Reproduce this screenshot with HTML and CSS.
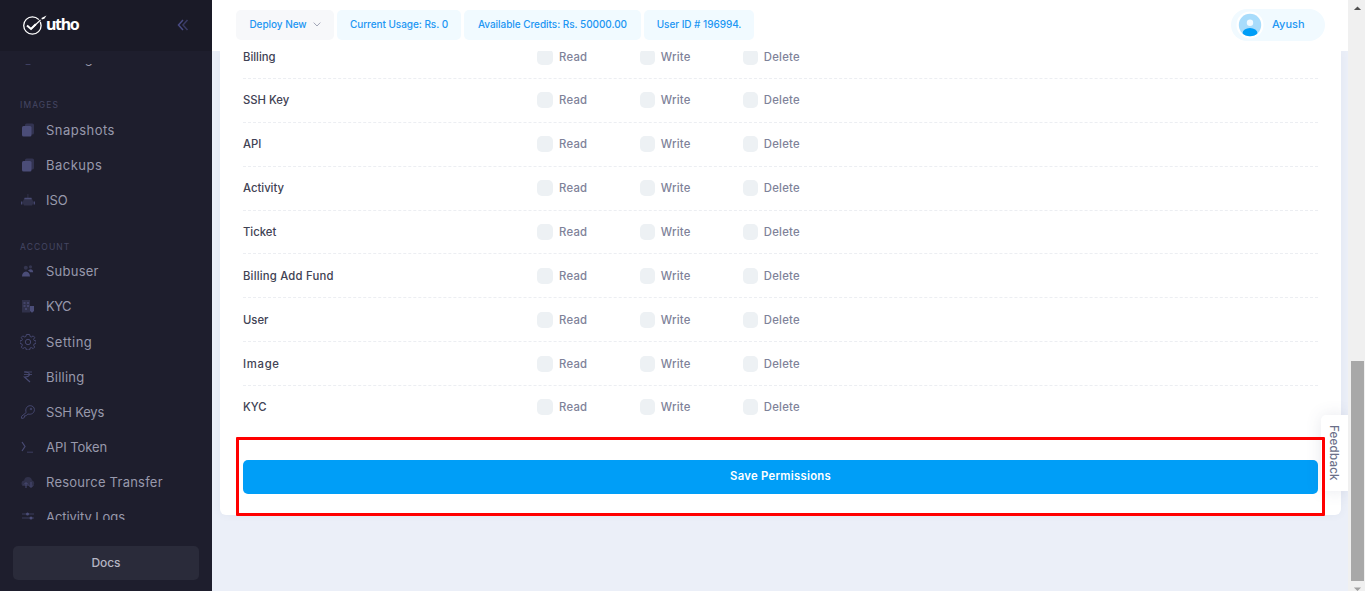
FILE: index.html
```
<!DOCTYPE html>
<html lang="en">
<head>
<meta charset="utf-8">
<title>Utho - Subuser Permissions</title>
<link rel="stylesheet" href="styles.css">
</head>
<body>
<div class="app">
  <aside class="sidebar">
    <div class="brand">
      <div class="logo">
        <svg width="24" height="22" viewBox="0 0 24 22" fill="none" stroke="#fff"><circle cx="9.400" cy="11.500" r="8.700" stroke-width="1.300"/><path d="M4 11.500l4 3.500 5-5" stroke-width="2"/><path d="M13 10l6.500-6" stroke="#1a1a27" stroke-width="2.500"/><path d="M8 15L17.500 6" stroke-width="1.100"/><path d="M18.500 4L23.500 1.500l-2.200 3.200-2.500.8z" fill="#fff" stroke="none"/></svg>
        <span class="logo-text">utho</span>
      </div>
      <svg class="collapse" width="12" height="12" viewBox="0 0 12 12" fill="none" stroke-width="1.500"><path d="M6 1L1.500 6 6 11" stroke="#494b84"/><path d="M10.500 1L6 6l4.500 5" stroke="#494b84" opacity=".65"/></svg>
    </div>
    <nav class="menu">
      <div class="menu-list">
        <a class="item clipped"><svg class="icon" viewBox="0 0 16 16"><path d="M4 13h8l-2 1.800H6z" fill="#494b74"/></svg><span>Hosting</span></a>
        <h4 class="heading">Images</h4>
        <a class="item wide"><svg class="icon" viewBox="0 0 16 16"><rect x="5" y="1.500" width="9" height="11" rx="1.500" fill="#323350"/><rect x="2" y="4" width="9.500" height="10.500" rx="1.500" fill="#4b4d78"/></svg><span>Snapshots</span></a>
        <a class="item wide"><svg class="icon" viewBox="0 0 16 16"><rect x="5" y="1.500" width="9" height="11" rx="1.500" fill="#323350"/><rect x="2" y="4" width="9.500" height="10.500" rx="1.500" fill="#4b4d78"/></svg><span>Backups</span></a>
        <a class="item tight"><svg class="icon" viewBox="0 0 16 16"><path d="M7.400 2h1v4h3.200l2 4.500-1.500 3H4l-1.500-3L4.400 6h3z" fill="#30314a"/><path d="M4.500 6.500h7M1.700 9.500v3M14.300 9.500v3" stroke="#494b74" stroke-width="1.300"/></svg><span>ISO</span></a>
        <h4 class="heading account">Account</h4>
        <a class="item"><svg class="icon" viewBox="0 0 16 16"><circle cx="5.800" cy="4.700" r="2" fill="#34354f"/><circle cx="10.500" cy="3.800" r="1.600" fill="#34354f"/><path d="M2 13.500c0-2.800 1.600-5 4-5s4 2.200 4 5zM8 8c.5-1 1.400-1.800 2.500-1.800 1.700 0 2.500 1.300 2.700 3h-3C9.500 8.500 9 8 8 8z" fill="#4b4d78"/></svg><span>Subuser</span></a>
        <a class="item tighter"><svg class="icon" viewBox="0 0 16 16"><path d="M2 2h8v12.500H2z" fill="#30314a"/><path d="M3.500 5h2M7 5h2M3.500 8h2M7 8h2M5 11h2" stroke="#494b74" stroke-width="1.400"/><path d="M10 8h4v5l-2 1.700-2-1.700z" fill="#4b4d78"/></svg><span>KYC</span></a>
        <a class="item wide"><svg class="icon" viewBox="0 0 16 16" fill="none" stroke="#45476f" stroke-width="1"><path d="M6.400.5h3.200l.5 2 1.200.5 1.900-1.100 1.500 1.500-1.100 2 .5 1 2 .5v2.500l-2 .6-.5 1.200 1.100 1.900-1.500 1.500-1.900-1.100-1.200.5-.5 2H6.400l-.5-2-1.200-.5-1.900 1.100-1.500-1.500 1.100-1.900-.5-1.200-2-.6V6.900l2-.5.5-1-1.100-2 1.500-1.500L4.700 3l1.200-.5z"/><circle cx="8" cy="8" r="2.700"/></svg><span>Setting</span></a>
        <a class="item"><svg class="icon" viewBox="0 0 16 16" fill="none" stroke="#494b74" stroke-width="1.100"><path d="M4 3h8M4 5.500h8" opacity=".8"/><path d="M4.500 3C11 2.500 11 8.300 4.500 8l5.500 5"/></svg><span>Billing</span></a>
        <a class="item key"><svg class="icon" viewBox="0 0 16 16" fill="none" stroke="#45476f" stroke-width="1"><path d="M6.200 8.500C4.800 5 7 1.700 10.200 1.700c2.500 0 4.200 1.700 4.200 4 0 3.200-3 5.300-6.600 4.300L6 11.800H4.500v1.500L3 14.300H1.500v-1.900z"/><circle cx="11" cy="5" r=".8"/></svg><span>SSH Keys</span></a>
        <a class="item tight"><svg class="icon" viewBox="0 0 16 16" fill="none" stroke="#494b74" stroke-width="1.200"><path d="M2 3l3 4.500L2 12"/><path d="M7 13.200h6" opacity=".6"/></svg><span>API Token</span></a>
        <a class="item"><svg class="icon" viewBox="0 0 16 16"><path d="M2.500 12C.5 9.500 2 6.500 4 6.500 4.500 4 6 3 8 3c2.500 0 3.700 1.500 4 3.500 2.500.5 3 4 1 5.500z" fill="#30314a"/><path d="M6 14V9M4 10.500l2-2 2 2M11 8v5M9 11.500l2 2 2-2" stroke="#494b74" fill="none"/></svg><span>Resource Transfer</span></a>
        <a class="item tight"><svg class="icon" viewBox="0 0 16 16"><path d="M2 5h12M2 9h12M2 13h12" stroke="#3b3c5c" stroke-width="1"/><circle cx="7.500" cy="5" r="1.500" fill="#4b4d78"/><circle cx="11" cy="9" r="1.500" fill="#4b4d78"/></svg><span>Activity Logs</span></a>
      </div>
    </nav>
    <div class="sidebar-foot"><a class="docs">Docs</a></div>
  </aside>

  <div class="main">
    <header class="topbar">
      <div class="chips">
        <a class="chip deploy">Deploy New <svg width="8" height="5" viewBox="0 0 8 5" fill="none" stroke="#a1a5b7"><path d="M.7.600L4 4 7.300.600"/></svg></a>
        <a class="chip usage">Current Usage: Rs. 0</a>
        <a class="chip credits">Available Credits: Rs. 50000.00</a>
        <a class="chip user-id">User ID # 196994.</a>
      </div>
      <a class="profile">
        <svg width="28" height="28" viewBox="0 0 28 28"><circle cx="14" cy="14" r="13.500" fill="#fff"/><clipPath id="face"><circle cx="14" cy="14" r="11.200"/></clipPath><g clip-path="url(#face)"><path d="M0 0h28v28H0z" fill="#a8dcfb"/><ellipse cx="14" cy="22.500" rx="7.500" ry="5.500" fill="#009ef7"/></g><circle cx="14" cy="11.700" r="3.200" fill="#f1faff"/></svg>
        <span>Ayush</span>
      </a>
    </header>
    <div class="content">
      <section class="card">
        <div class="rows">
          <div class="row"><span class="name">Billing</span><label class="perm"><i></i>Read</label><label class="perm"><i></i>Write</label><label class="perm"><i></i>Delete</label></div>
          <div class="row"><span class="name">SSH Key</span><label class="perm"><i></i>Read</label><label class="perm"><i></i>Write</label><label class="perm"><i></i>Delete</label></div>
          <div class="row"><span class="name">API</span><label class="perm"><i></i>Read</label><label class="perm"><i></i>Write</label><label class="perm"><i></i>Delete</label></div>
          <div class="row"><span class="name">Activity</span><label class="perm"><i></i>Read</label><label class="perm"><i></i>Write</label><label class="perm"><i></i>Delete</label></div>
          <div class="row"><span class="name">Ticket</span><label class="perm"><i></i>Read</label><label class="perm"><i></i>Write</label><label class="perm"><i></i>Delete</label></div>
          <div class="row"><span class="name long">Billing Add Fund</span><label class="perm"><i></i>Read</label><label class="perm"><i></i>Write</label><label class="perm"><i></i>Delete</label></div>
          <div class="row"><span class="name">User</span><label class="perm"><i></i>Read</label><label class="perm"><i></i>Write</label><label class="perm"><i></i>Delete</label></div>
          <div class="row"><span class="name image">Image</span><label class="perm"><i></i>Read</label><label class="perm"><i></i>Write</label><label class="perm"><i></i>Delete</label></div>
          <div class="row"><span class="name">KYC</span><label class="perm"><i></i>Read</label><label class="perm"><i></i>Write</label><label class="perm"><i></i>Delete</label></div>
        </div>
        <div class="actions"><a class="save">Save Permissions</a><div class="highlight"></div></div>
      </section>
    </div>
    <a class="feedback">Feedback</a>
  </div>

  <div class="scrollbar">
    <svg width="9" height="5" viewBox="0 0 9 5"><path d="M.5 4.500L4.500.500l4 4z" fill="#505050"/></svg>
    <div class="thumb"></div>
    <svg width="9" height="5" viewBox="0 0 9 5"><path d="M.5.500h8l-4 4z" fill="#a0a0a0"/></svg>
  </div>
</div>
</body>
</html>
```
FILE: styles.css
```
* { box-sizing: border-box; }
body { margin: 0; font-family: Inter, "Open Sans", sans-serif; overflow: hidden; }
.app { display: grid; grid-template-columns: 212px 1136px 17px; height: 591px; background: #ebeff8; }

.sidebar { display: flex; flex-direction: column; background: #1e1e2d; }
.brand { display: flex; align-items: center; justify-content: space-between; height: 51px; padding: 0 23px 2px; background: #1a1a27; }
.logo { display: flex; align-items: center; }
.logo-text { margin: -1px 0 0 -1px; color: #fff; font: 700 16px/24px "Noto Sans", sans-serif; letter-spacing: -1.3px; }
.menu { height: 456px; margin-top: 13px; overflow: hidden; }
.menu-list { margin-top: -22.4px; }
.item { display: flex; align-items: center; gap: 10px; height: 35.15px; padding-left: 20px; color: #9899ac; font-size: 13px; letter-spacing: 0.24px; white-space: nowrap; }
.item.wide { letter-spacing: 0.48px; }
.item.tight { letter-spacing: -0.05px; }
.item.tighter { letter-spacing: -0.5px; }
.item.key { letter-spacing: -0.2px; }
.item.clipped { padding-bottom: 2px; letter-spacing: -0.1px; }
.icon { width: 16px; height: 16px; }
.heading { height: 35.8px; margin: 0; padding: 22.4px 0 0 20px; color: #454764; font-size: 8.5px; font-weight: 400; line-height: 13px; letter-spacing: 1.1px; text-transform: uppercase; }
.heading.account { padding-top: 23.4px; }
.sidebar-foot { padding: 26px 13px 0; }
.docs { display: flex; align-items: center; justify-content: center; height: 34px; padding-bottom: 1px; border-radius: 5px; background: #2a2b3a; color: #b5b5c3; font-size: 12px; font-weight: 500; letter-spacing: -0.1px; }

.main { position: relative; display: flex; flex-direction: column; min-width: 0; }
.topbar { display: flex; flex: none; align-items: center; justify-content: space-between; height: 51px; padding: 0 23px 2px 24px; background: #fff; }
.chips { display: flex; gap: 3px; }
.chip { display: flex; align-items: center; justify-content: center; height: 30px; padding-bottom: 1px; border-radius: 5px; background: #f1faff; color: #2196f3; font-size: 10px; font-weight: 500; letter-spacing: -0.05px; white-space: nowrap; }
.deploy { gap: 6px; width: 98px; background: #f7f8fa; }
.usage { width: 124px; }
.credits { width: 177px; }
.user-id { width: 110px; }
.profile { display: flex; align-items: center; gap: 8px; width: 94px; height: 32px; padding-left: 5px; border-radius: 16px; background: #f1faff; color: #2196f3; font-size: 11px; font-weight: 500; }
.profile span { padding-bottom: 2px; }

.content { flex: 1; padding: 0 7px 0 8px; overflow: hidden; }
.card { display: flow-root; height: 464px; padding: 0 23px; border-radius: 0 0 6px 6px; background: #fff; box-shadow: 0 0 8px rgba(76, 87, 125, 0.06); }
.rows { height: 378.7px; margin-top: -15.86px; }
.row { display: grid; grid-template-columns: 294px 102.8px 103px 103px; align-items: center; height: 43.86px; border-bottom: 1px dashed #eceef2; font-size: 11.3px; }
.row:last-child { height: 42.86px; border-bottom: 0; }
.name { color: #3f4254; font-weight: 450; }
.name.long { letter-spacing: 0.2px; }
.name.image { letter-spacing: 0.7px; }
.perm { display: flex; align-items: center; gap: 6px; color: #7e8299; font-weight: 500; letter-spacing: 0.25px; }
.perm i { width: 16px; height: 16px; border-radius: 5px; background: #edf1f4; }
.perm + .perm { gap: 5.5px; }
.perm + .perm i { width: 15.5px; }
.actions { position: relative; margin-top: 46px; }
.save { display: flex; align-items: center; justify-content: center; height: 34px; padding-bottom: 1px; border-radius: 5px; background: #009ef7; color: #fff; font-size: 11.3px; font-weight: 600; letter-spacing: 0.27px; }
.highlight { position: absolute; z-index: 3; top: -23px; right: -7px; bottom: -22px; left: -7px; border: 3px solid #f00; border-radius: 1px; }
.feedback { position: absolute; z-index: 1; top: 415px; right: 0; display: flex; align-items: center; justify-content: center; width: 27px; height: 76px; padding-right: 1px; border-radius: 5px 0 0 5px; background: #fff; box-shadow: 0 0 16px rgba(76, 87, 125, 0.13); color: #6b7089; font-size: 11.5px; font-weight: 500; letter-spacing: 0.25px; writing-mode: vertical-rl; clip-path: inset(-16px 0 -16px -16px); }

.scrollbar { display: flex; flex-direction: column; align-items: center; height: 591px; padding: 6px 0 0 1px; background: #f0f0f0; }
.thumb { flex: none; width: 13px; height: 220px; margin: 350px 0 6px; background: #a8a8a8; }
```
